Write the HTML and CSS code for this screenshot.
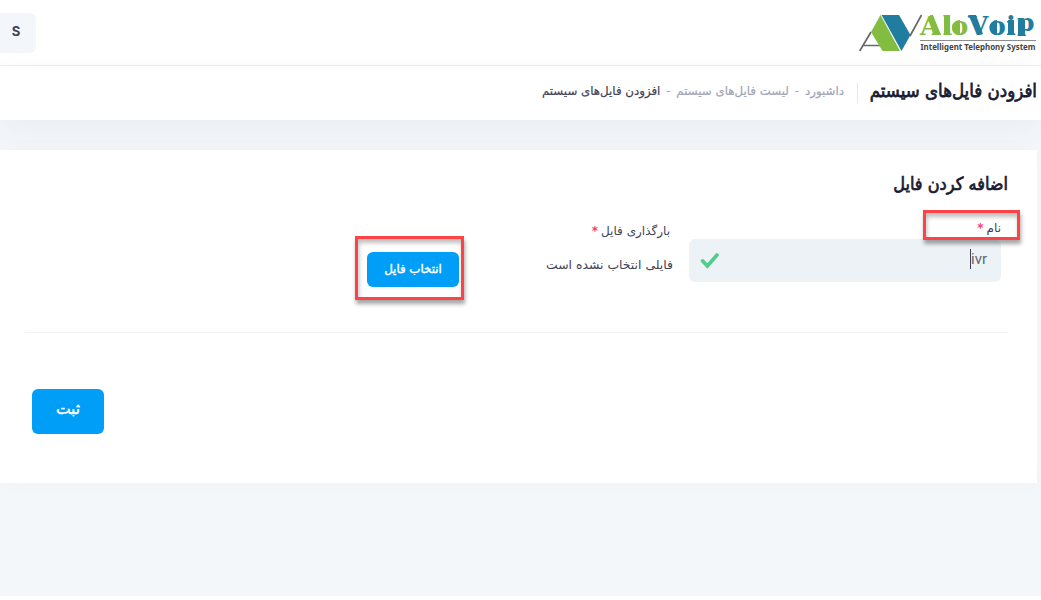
FILE: index.html
```
<!DOCTYPE html>
<html lang="fa" dir="rtl">
<head>
<meta charset="utf-8">
<title>AloVoip</title>
<link rel="stylesheet" href="styles.css">
</head>
<body>
<div class="page">
  <header class="topbar">
    <svg class="logo" width="182" height="44" viewBox="0 0 182 44" direction="ltr">
      <path d="M.7 39L12 20M3 33.500H23M51 24L62.500 3" class="logo-stroke"/>
      <path d="M21.500 3L12 20L23.500 39H41Z" fill="#82bc41"/>
      <path d="M22.500 3H40L51.500 23L42.500 39Z" fill="#217d9f"/>
      <path d="M71 3H74L82 23H74ZM85 3H91V23H85ZM101 8A8 7.500 0 0 0 101 23Z" fill="#82bc41"/>
      <path d="M109 3H117L124 22L121.500 23ZM138 8A7.500 7.500 0 0 0 138 23ZM149 8H155V23H149ZM159 8H166V23H159Z" fill="#217d9f"/>
      <text x="61 83.500 92" y="23" class="brand green">Alo</text>
      <text x="109 129.500 147" y="23" class="brand blue">Voi<tspan x="158" y="19" class="brand-p">p</tspan></text>
      <path d="M61 28.500H177" class="logo-rule"/>
      <text x="61.500" y="38" class="tagline" textLength="115" lengthAdjust="spacingAndGlyphs">Intelligent Telephony System</text>
    </svg>
    <div class="avatar">S</div>
  </header>
  <div class="subheader">
    <h1>افزودن فایل‌های سیستم</h1>
    <nav class="crumbs">
      <a>داشبورد</a><i>-</i><a>لیست فایل‌های سیستم</a><i>-</i><span>افزودن فایل‌های سیستم</span>
    </nav>
  </div>
  <main class="card">
    <h2>اضافه کردن فایل</h2>
    <div class="fields">
      <div class="name-field">
        <div class="name-label"><span class="label">نام</span><b class="star">*</b></div>
        <div class="input"><span class="value">ivr</span>
          <svg width="20" height="17" viewBox="0 0 20 17"><path d="M2.500 8.800L7.300 14L17 3" class="check"/></svg>
        </div>
        <div class="mark mark-name"></div>
      </div>
      <div class="file-field">
        <div class="file-label"><span class="label">بارگذاری فایل</span><b class="star">*</b></div>
        <div class="file-state">فایلی انتخاب نشده است</div>
      </div>
      <div class="pick"><button class="choose"><span>انتخاب فایل</span></button><div class="mark mark-file"></div></div>
    </div>
    <hr>
    <button class="submit"><span>ثبت</span></button>
  </main>
</div>
</body>
</html>
```
FILE: styles.css
```
* { box-sizing: border-box; }
body { margin: 0; background: #fff; font-family: "DejaVu Sans", sans-serif; color: #3f4254; overflow: hidden; }
.page { height: 596px; background: #f3f7fa; }
.topbar { height: 66px; background: #fff; border-bottom: 1px solid #ebedf0; display: flex; justify-content: space-between; align-items: flex-start; }
.logo { margin-top: 12px; direction: ltr; overflow: visible; }
.logo-stroke { stroke: #68696b; stroke-width: 1.7; fill: none; }
.logo-rule { stroke: #8b8c8e; }
.brand { font: bold 26px "DejaVu Serif", serif; }
.brand-p { font-size: 25px; }
.green { fill: #82bc41; }
.blue { fill: #217d9f; }
.tagline { font: bold 8px "Noto Sans", sans-serif; fill: #444; }
.avatar { width: 36px; height: 40px; margin-top: 13px; border-radius: 0 6px 6px 0; background: #f3f7fb; font: bold 13px/37px Inter, sans-serif; text-align: center; padding-right: 4px; }
.subheader { height: 54px; background: #fff; box-shadow: 0 10px 30px rgba(82, 63, 105, .05); display: flex; padding-right: 4px; }
h1, h2 { margin: 0; color: #181c32; white-space: nowrap; font-weight: normal; -webkit-text-stroke: .7px #181c32; transform-origin: right center; }
h1 { font-size: 17px; line-height: 50px; width: 167px; transform: scale(.98, 1.08); }
.crumbs { display: flex; height: 20px; margin: 17px 12px 0 0; padding-right: 13px; border-right: 1px solid #e4e6ef; font-size: 11.8px; line-height: 17px; color: #a1a5b7; white-space: nowrap; -webkit-text-stroke: .2px; }
.crumbs i { font-style: normal; width: 16px; text-align: center; }
.crumbs span { color: #3f4254; }
.card { width: 1037px; height: 333px; margin: 30px 4px 0 0; background: #fff; padding: 18px 29px 0 25px; box-shadow: 0 0 20px rgba(76, 87, 125, .02); }
h2 { font-size: 17px; line-height: 32px; height: 42px; transform: scale(.95, 1.06); transform-origin: right 17px; }
.fields { display: flex; height: 122px; }
.name-field { position: relative; width: 319px; padding-right: 7px; }
.name-label { height: 29px; line-height: 36px; font-size: 12px; display: flex; gap: 3px; }
.star { color: #f1416c; }
.input { height: 43px; background: #edf2f7; border-radius: 6px; display: flex; justify-content: space-between; align-items: center; padding: 0 14px 0 11px; }
.value { font: 15px/20px Roboto, sans-serif; direction: ltr; border-left: 1px solid #3f4254; color: #626579; margin-bottom: 3px; }
.check { fill: none; stroke: #50cd89; stroke-width: 3.6; stroke-linecap: round; }
.mark { position: absolute; border: 3px solid #fc4346; box-shadow: 1px 4px 4px rgba(0, 0, 0, .35), inset 1px 4px 4px rgba(0, 0, 0, .25); }
.mark-name { right: -12px; top: 0; width: 97px; height: 30px; }
.file-field { width: 143px; margin-right: 16px; white-space: nowrap; }
.file-label { display: flex; gap: 3px; font-size: 12px; line-height: 42px; height: 41px; padding-right: 3px; }
.file-state { font-size: 12.4px; line-height: 28px; }
.pick { position: relative; margin-right: 71px; padding-top: 42px; }
button { display: block; border: 0; padding: 0; border-radius: 6px; background: #009ef7; color: #fff; font-family: "DejaVu Sans", sans-serif; white-space: nowrap; -webkit-text-stroke: .4px #fff; }
.choose { width: 92px; height: 35px; font-size: 11.8px; padding-bottom: 2px; }
.mark-file { right: -5px; top: 26px; width: 109px; height: 64px; }
hr { border: 0; border-top: 1px solid #eff2f5; margin: 0; }
.submit { width: 72px; height: 45px; margin: 56px auto 0 7px; font-size: 15.5px; padding-bottom: 5px; }
```
